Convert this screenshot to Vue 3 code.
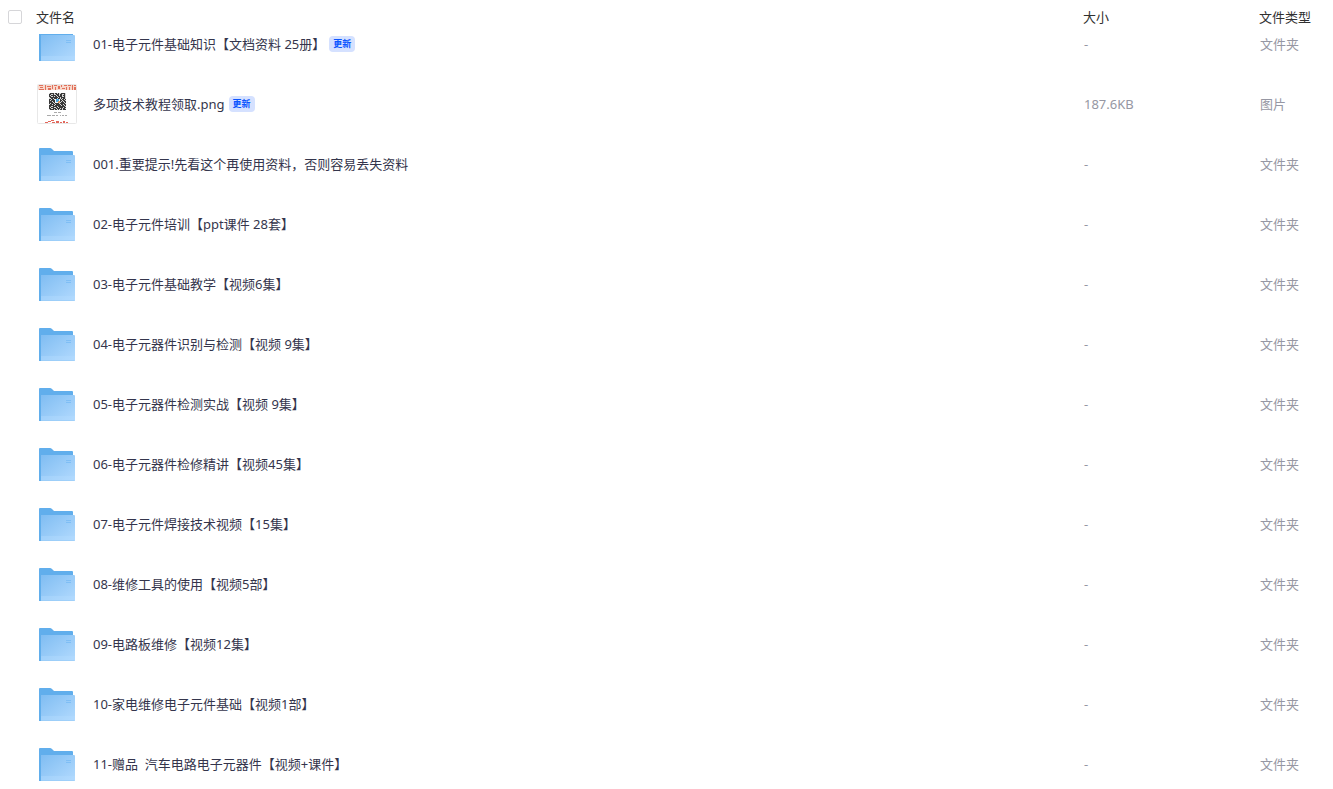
<script setup>
import { ref } from 'vue'

const allChecked = ref(false)

const files = [
  { name: '01-电子元件基础知识【文档资料 25册】', fresh: true },
  { name: '多项技术教程领取.png', fresh: true, image: true, size: '187.6KB', type: '图片' },
  { name: '001.重要提示!先看这个再使用资料，否则容易丢失资料' },
  { name: '02-电子元件培训【ppt课件 28套】' },
  { name: '03-电子元件基础教学【视频6集】' },
  { name: '04-电子元器件识别与检测【视频 9集】' },
  { name: '05-电子元器件检测实战【视频 9集】' },
  { name: '06-电子元器件检修精讲【视频45集】' },
  { name: '07-电子元件焊接技术视频【15集】' },
  { name: '08-维修工具的使用【视频5部】' },
  { name: '09-电路板维修【视频12集】' },
  { name: '10-家电维修电子元件基础【视频1部】' },
  { name: '11-赠品  汽车电路电子元器件【视频+课件】' },
]

const qrRows = [
  '01111011010011110',
  '11001001110110010',
  '10111110110110110',
  '11001011011110010',
  '01111111101011110',
  '00110111011010110',
  '11011011101101101',
  '10111110001110110',
  '11101100001101011',
  '11110110011011101',
  '10111011110111110',
  '01101101111011011',
  '11111011111101101',
  '11001111011111110',
  '10111001101111011',
  '11001110111010110',
  '01111011010110111',
]
const qrPath = qrRows
  .flatMap((row, y) => [...row].map((c, x) => (c === '1' ? `M${x + 12} ${y + 9}h1v1h-1z` : '')))
  .join('')
</script>

<template>
  <main class="browser">
    <svg class="defs" width="0" height="0" aria-hidden="true">
      <defs>
        <linearGradient id="folder-front" x1="0" y1="0" x2="1" y2="1">
          <stop offset="0" stop-color="#80bdf2" />
          <stop offset="1" stop-color="#b2dafe" />
        </linearGradient>
      </defs>
    </svg>
    <table class="files">
      <thead>
        <tr class="head-row">
          <th class="head-name" scope="col">
            <input v-model="allChecked" class="check" type="checkbox" aria-label="全选" />
            <span>文件名</span>
          </th>
          <th scope="col">大小</th>
          <th scope="col">文件类型</th>
        </tr>
      </thead>
      <tbody>
        <tr v-for="file in files" :key="file.name" class="row">
          <td class="name-cell">
            <svg v-if="file.image" class="icon" viewBox="0 0 40 40" aria-hidden="true">
              <rect x=".5" y=".5" width="39" height="39" rx="1" fill="#fff" stroke="#e8e8e8" />
              <path d="M1 1h38v5H1z" fill="#f8d8cc" />
              <path
                d="M2 1h4v1H2zM3 3h3v1H3zM2 5h5v1H2zM8 1h1v5H8zM10 2h4v1h-4zM11 4h3v2h-3zM15 1h1v4h-1zM17 1h3v1h-3zM18 3h1v3h-1zM21 2h2v3h-2zM24 1h1v2h-1zM25 4h3v1h-3zM27 1h3v1h-3zM29 3h1v3h-1zM31 1h3v1h-3zM32 3h1v3h-1zM35 1h1v5h-1zM37 1h2v1h-2zM37 3h2v3h-2z"
                fill="#d9583f"
                opacity=".8"
              />
              <path d="M12 9h17v17H12z" fill="#222" opacity=".18" />
              <path :d="qrPath" fill="#1c1c1c" opacity=".85" />
              <path d="M18 15h5v4h-5z" fill="#f3f7fa" />
              <path d="M19 15h3v3h-3z" fill="#4aa6de" />
              <path d="M21 17h2v2h-2z" fill="#dc9c62" />
              <path d="M17 28h3v1h-3zM21 28h3v1h-3z" fill="#aaa" />
              <path d="M10 31h4v1h-4zM15 31h3v1h-3zM19 31h2v1h-2zM23 31h1v1h-1zM25 31h2v1h-2zM28 31h2v1h-2z" fill="#aaa" />
              <path d="M8 38h3v1H8zM11 37h3v1h-3zM14 36h3v1h-3zM15 38h3v1h-3zM19 37h3v2h-3zM23 38h2v1h-2zM26 37h2v2h-2zM29 38h2v1h-2z" fill="#e2685c" />
            </svg>
            <svg v-else class="icon" viewBox="0 0 40 40" aria-hidden="true">
              <path d="M2 5q0-1 1-1h10q1 0 2 1l2 2h18q1 0 1 1v29H2z" fill="#61aeec" />
              <path d="M4 11h33q1 0 1 1v24q0 1-1 1H4z" fill="url(#folder-front)" />
              <path d="M4 32h34v4q0 1-1 1H4z" fill="#b4dcff" opacity=".4" />
              <path d="M4 36h34q0 1-1 1H4z" fill="#94c9f7" opacity=".6" />
              <path d="M29 16h5v1h-5zM29 18h5v1h-5z" fill="#7fbef5" />
            </svg>
            <a class="name" href="#">{{ file.name }}</a>
            <span v-if="file.fresh" class="badge">更新</span>
          </td>
          <td class="meta">{{ file.size || '-' }}</td>
          <td class="meta">{{ file.type || '文件夹' }}</td>
        </tr>
      </tbody>
    </table>
  </main>
</template>

<style>
body {
  margin: 0;
  background: #fff;
}
</style>

<style scoped>
.browser {
  height: 100vh;
  overflow: hidden;
  font-family: "Noto Sans", "Noto Sans CJK SC", sans-serif;
  font-size: 13px;
  line-height: 20px;
  color: #34354c;
}
.defs {
  position: absolute;
}
.files,
.files thead,
.files tbody {
  display: block;
}
/* The header stays above the list, which is scrolled by a third of a row. */
.files thead {
  position: relative;
  z-index: 1;
  background: #fff;
}
.files tbody {
  margin-top: -20px;
}
.head-row,
.row {
  display: grid;
  grid-template-columns: minmax(0, 1fr) 176px 73px;
  align-items: center;
}
.head-row {
  height: 34px;
  padding-right: 1px;
}
.row {
  height: 60px;
}
th,
td {
  padding: 0;
  text-align: left;
  font-weight: 400;
  white-space: nowrap;
}
th {
  color: #303030;
}
.head-name {
  display: flex;
  align-items: center;
  gap: 14px;
  padding-left: 8px;
}
.check {
  appearance: none;
  box-sizing: border-box;
  width: 14px;
  height: 14px;
  margin: 0;
  border: 1px solid #d6d6d9;
  border-radius: 2px;
  background: #fff;
}
.check:checked {
  background: #06a7ff;
  border-color: #06a7ff;
}
.name-cell {
  display: flex;
  align-items: center;
  padding-left: 37px;
}
.icon {
  flex: none;
  width: 40px;
  height: 40px;
  margin-right: 16px;
}
.name {
  color: inherit;
  text-decoration: none;
  white-space: pre;
}
.badge {
  margin-left: 4px;
  padding: 0 4px;
  border-radius: 4px;
  background: #d5e1ff;
  color: #0a55ff;
  font-size: 9px;
  font-weight: 700;
  line-height: 16px;
}
.meta {
  color: #9697a3;
}
</style>
